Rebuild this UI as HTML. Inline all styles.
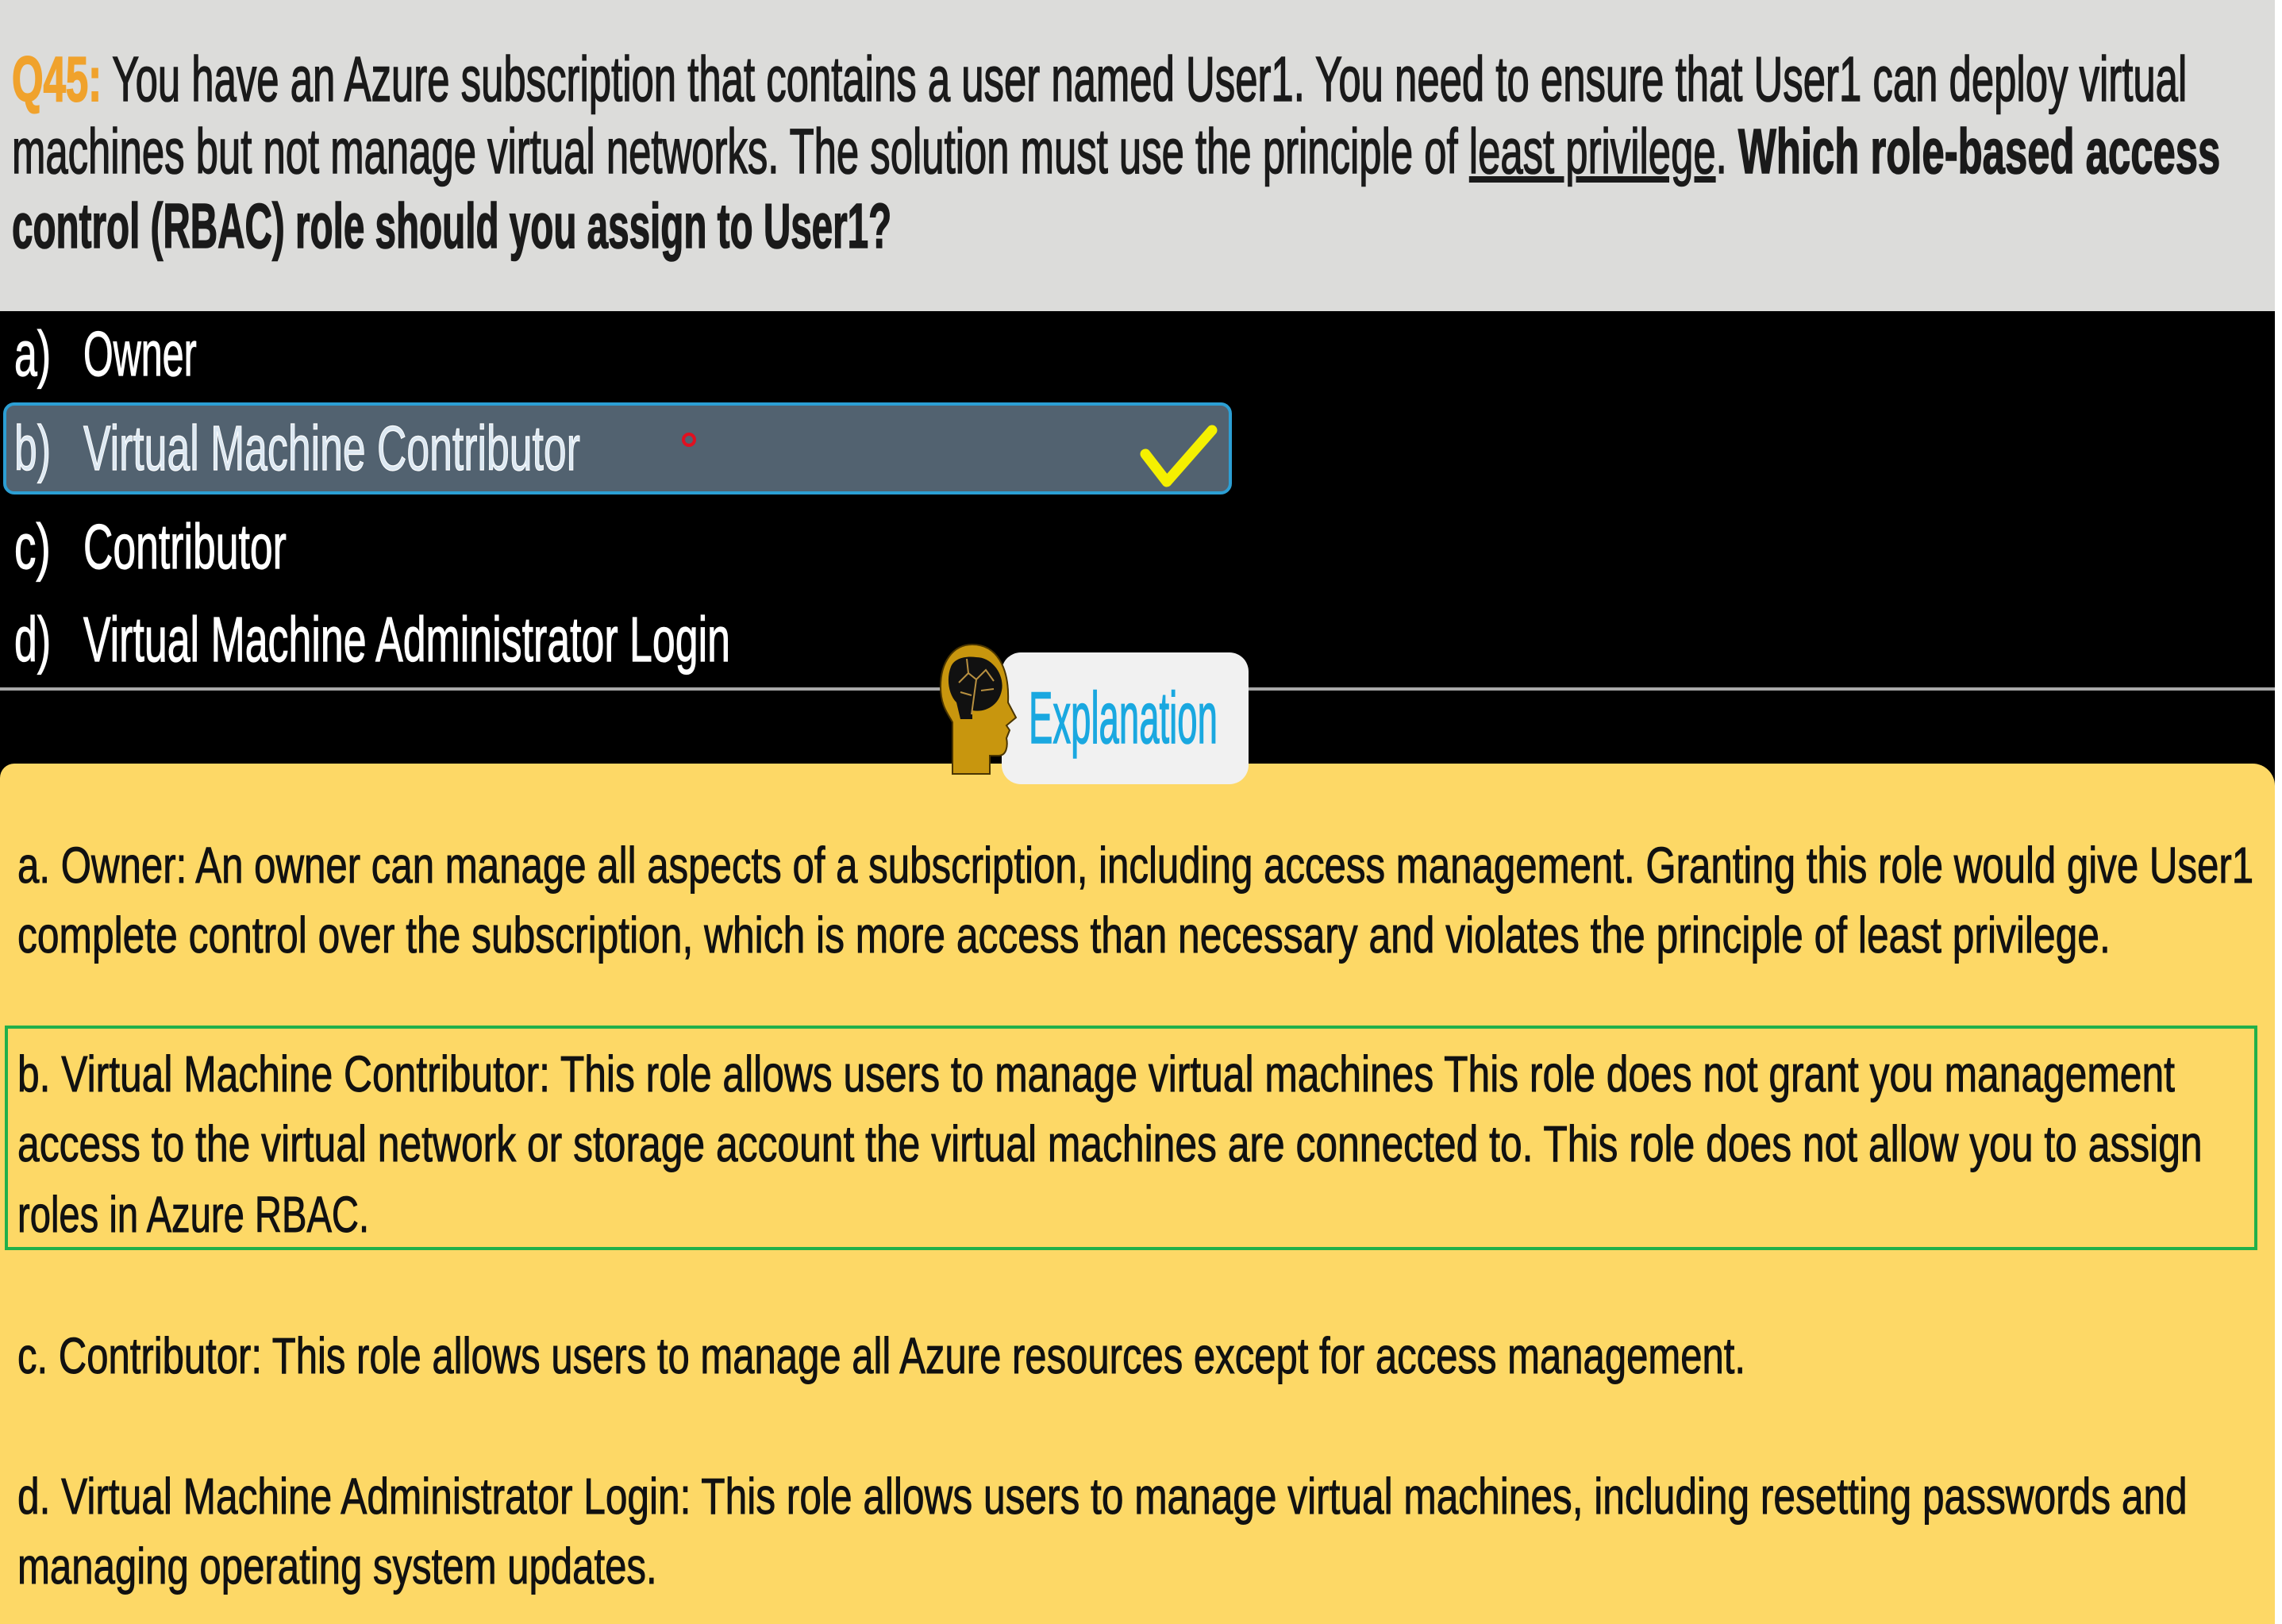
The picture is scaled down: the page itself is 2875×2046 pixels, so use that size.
<!DOCTYPE html>
<html><head><meta charset="utf-8"><style>
html,body{margin:0;padding:0;width:2875px;height:2046px;overflow:hidden;background:#fff}
#top{position:absolute;left:0;top:0;width:2866px;height:392px;background:#dcdcda}
#blk{position:absolute;left:0;top:392px;width:2866px;height:600px;background:#000}
#yel{position:absolute;left:0;top:962px;width:2866px;height:1084px;background:#fdd866;border-radius:18px 28px 0 0}
.ln{position:absolute;white-space:nowrap;transform-origin:0 50%;font-family:"Liberation Sans",sans-serif}
.q{font-size:80px;height:90px;line-height:90px;color:#1a1a1a;-webkit-text-stroke:1.6px #1a1a1a}
.o{font-size:80px;height:90px;line-height:90px;color:#fff;-webkit-text-stroke:1.2px #fff}
.e{font-size:64px;height:80px;line-height:80px;color:#111;-webkit-text-stroke:1px #111}
#hl{position:absolute;left:4px;top:507px;width:1548px;height:116px;background:#526270;border:4px solid #2c9fd4;border-radius:14px;box-sizing:border-box}
#sep{position:absolute;left:0;top:866px;width:2866px;height:4px;background:#a8a8a8}
#gb{position:absolute;left:6px;top:1292px;width:2838px;height:283px;border:4px solid #22b04a;box-sizing:border-box}
#exb{position:absolute;left:1262px;top:822px;width:311px;height:166px;background:#f1f1f1;border-radius:24px}
</style></head><body>
<div id="top"></div><div id="blk"></div><div id="sep"></div><div id="yel"></div>
<div id="hl"></div>
<svg style="position:absolute;left:0;top:0" width="2875" height="2046">
<polyline points="1443,572 1470,607 1527,542" fill="none" stroke="#f5f000" stroke-width="13" stroke-linecap="round" stroke-linejoin="round"/>
<circle cx="868" cy="554" r="7" fill="none" stroke="#e01020" stroke-width="4"/>
</svg>
<div id="gb"></div>
<div id="exb"></div>
<svg style="position:absolute;left:1180px;top:800px" width="150" height="190" viewBox="0 0 150 190">
<path d="M45 12 C20 12 5 35 5 65 C5 90 15 100 20 110 L20 175 L67 175 L67 152 L78 152 C88 152 90 140 88 130 L92 120 L88 114 L100 104 L90 85 C92 40 75 12 45 12 Z" fill="#c8960e" stroke="#4a3500" stroke-width="2"/>
<path d="M18 40 C12 55 15 75 25 85 L30 106 L45 106 L45 95 C60 98 78 90 82 70 C86 50 70 28 50 28 C35 26 22 30 18 40 Z" fill="#111"/>
<path d="M28 60 L40 48 L50 56 L62 44 L72 58 M40 48 L38 30 M50 56 L44 100 M56 70 L72 68 M30 72 L44 76" stroke="#b89040" stroke-width="2" fill="none"/>
</svg>
<div class="ln" style="left:1296px;top:850px;height:110px;line-height:110px;font-size:92px;color:#1aa8e0;-webkit-text-stroke:1.5px #1aa8e0" id="ex">Explanation</div>

<div class="ln q" style="top:55px;left:15px" w="2740"><span style="color:#f0a22c;-webkit-text-stroke:2px #f0a22c;font-weight:bold">Q45:</span> You have an Azure subscription that contains a user named User1. You need to ensure that User1 can deploy virtual</div>
<div class="ln q" style="top:146px;left:15px" w="2782">machines but not manage virtual networks. The solution must use the principle of <u>least privilege</u>. <b>Which role-based access</b></div>
<div class="ln q" style="top:240px;left:15px" w="1108"><b>control (RBAC) role should you assign to User1?</b></div>

<div class="ln o" style="top:401px;left:18px" w="46">a)</div>
<div class="ln o" style="top:401px;left:105px" w="143">Owner</div>
<div class="ln o" style="top:520px;left:18px;color:#dce8f2" w="46">b)</div>
<div class="ln o" style="top:520px;left:105px;color:#dce8f2" w="626">Virtual Machine Contributor</div>
<div class="ln o" style="top:644px;left:18px" w="46">c)</div>
<div class="ln o" style="top:644px;left:105px" w="256">Contributor</div>
<div class="ln o" style="top:761px;left:18px" w="46">d)</div>
<div class="ln o" style="top:761px;left:105px" w="815">Virtual Machine Administrator Login</div>

<div class="ln e" style="top:1050px;left:22px" w="2817">a. Owner: An owner can manage all aspects of a subscription, including access management. Granting this role would give User1</div>
<div class="ln e" style="top:1138px;left:22px" w="2637">complete control over the subscription, which is more access than necessary and violates the principle of least privilege.</div>
<div class="ln e" style="top:1313px;left:22px" w="2718">b. Virtual Machine Contributor: This role allows users to manage virtual machines This role does not grant you management</div>
<div class="ln e" style="top:1401px;left:22px" w="2753">access to the virtual network or storage account the virtual machines are connected to. This role does not allow you to assign</div>
<div class="ln e" style="top:1490px;left:22px" w="443">roles in Azure RBAC.</div>
<div class="ln e" style="top:1668px;left:22px" w="2177">c. Contributor: This role allows users to manage all Azure resources except for access management.</div>
<div class="ln e" style="top:1845px;left:22px" w="2734">d. Virtual Machine Administrator Login: This role allows users to manage virtual machines, including resetting passwords and</div>
<div class="ln e" style="top:1933px;left:22px" w="806">managing operating system updates.</div>
<script>
document.querySelectorAll('.ln[w]').forEach(function(el){
 var t=parseFloat(el.getAttribute('w'));var w=el.scrollWidth;
 if(w>0)el.style.transform='scaleX('+(t/w)+')';
});
var ex=document.getElementById('ex');ex.style.transform='scaleX('+(238/ex.scrollWidth)+')';
</script>
</body></html>
